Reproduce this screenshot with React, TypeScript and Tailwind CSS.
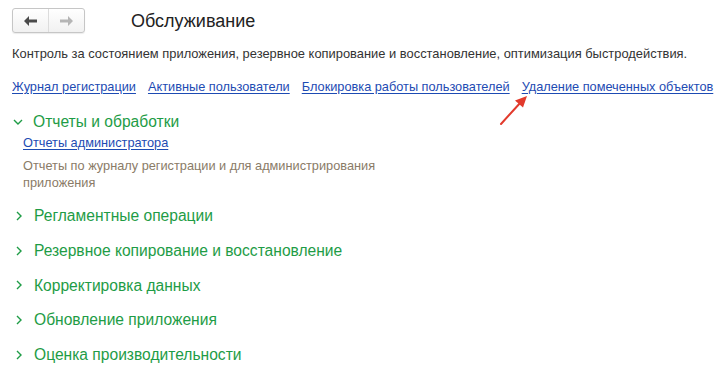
import { useState } from 'react'

const links = [
  'Журнал регистрации',
  'Активные пользователи',
  'Блокировка работы пользователей',
  'Удаление помеченных объектов',
]

const sections = [
  'Регламентные операции',
  'Резервное копирование и восстановление',
  'Корректировка данных',
  'Обновление приложения',
  'Оценка производительности',
]

function Chevron({ open }: { open?: boolean }) {
  return (
    <svg width="10" height="10" viewBox="0 0 10 10" className="shrink-0">
      {open ? (
        <path d="M1 3 L5 7 L9 3" fill="none" stroke="#1e9c46" strokeWidth="1.4" />
      ) : (
        <path d="M3 1 L7 5 L3 9" fill="none" stroke="#1e9c46" strokeWidth="1.4" />
      )}
    </svg>
  )
}

export default function App() {
  const [open, setOpen] = useState(true)

  return (
    <div
      className="relative w-[723px] h-[376px] bg-white overflow-hidden px-3 pt-2 text-[#333]"
      style={{ fontFamily: '"Liberation Sans", Arial, sans-serif' }}
    >
      {/* Header */}
      <div className="flex items-center">
        <div className="flex h-[25px] w-[73px] rounded-[3px] border border-[#c6c6c6] bg-gradient-to-b from-white to-[#f1f1f1] shadow-[0_1px_1px_rgba(0,0,0,0.08)]">
          <button className="flex flex-1 items-center justify-center border-r border-[#dcdcdc]">
            <svg width="13" height="10" viewBox="0 0 13 10">
              <path d="M0 5 L5 0 L5 3.5 L13 3.5 L13 6.5 L5 6.5 L5 10 Z" fill="#4a4a4a" />
            </svg>
          </button>
          <button className="flex flex-1 items-center justify-center">
            <svg width="13" height="10" viewBox="0 0 13 10">
              <path d="M13 5 L8 0 L8 3.5 L0 3.5 L0 6.5 L8 6.5 L8 10 Z" fill="#b5b5b5" />
            </svg>
          </button>
        </div>
        <h1 className="ml-[46px] text-[18px] leading-6 text-[#222]">Обслуживание</h1>
      </div>

      {/* Description */}
      <p className="mt-[13px] text-[12.9px] leading-[15px] text-[#333]">
        Контроль за состоянием приложения, резервное копирование и восстановление, оптимизация быстродействия.
      </p>

      {/* Links */}
      <div className="mt-[18px] flex gap-3 text-[12.75px] leading-4">
        {links.map(l => (
          <a key={l} href="#" className="text-[#1d4bb3] underline underline-offset-2 whitespace-nowrap">
            {l}
          </a>
        ))}
      </div>

      {/* Sections */}
      <div className="mt-[17px] flex flex-col">
        <button
          onClick={() => setOpen(!open)}
          className="flex items-center gap-[10px] pl-[1px] h-5 text-[15.6px] text-[#1e9c46]"
        >
          <Chevron open={open} />
          Отчеты и обработки
        </button>
        {open && (
          <div className="pl-[11px]">
            <a href="#" className="mt-[3px] block w-fit text-[12.75px] leading-4 text-[#1d4bb3] underline underline-offset-2">
              Отчеты администратора
            </a>
            <p className="mt-[6px] w-[370px] text-[12.75px] leading-[17px] text-[#8a7b67]">
              Отчеты по журналу регистрации и для администрирования приложения
            </p>
          </div>
        )}
        <div className="mt-[15px] flex flex-col gap-[14.7px]">
          {sections.map(s => (
            <div key={s} className="flex items-center gap-[10px] pl-[2px] h-5 text-[15.6px] text-[#1e9c46]">
              <Chevron />
              {s}
            </div>
          ))}
        </div>
      </div>

      {/* Red arrow annotation */}
      <svg className="absolute left-[496px] top-[92px]" width="36" height="36" viewBox="0 0 36 36">
        <line x1="5" y1="32" x2="25" y2="10" stroke="#e23a2c" strokeWidth="2" strokeLinecap="round" />
        <path d="M31 4 L19 8.5 L27 15.5 Z" fill="#e23a2c" />
      </svg>
    </div>
  )
}
